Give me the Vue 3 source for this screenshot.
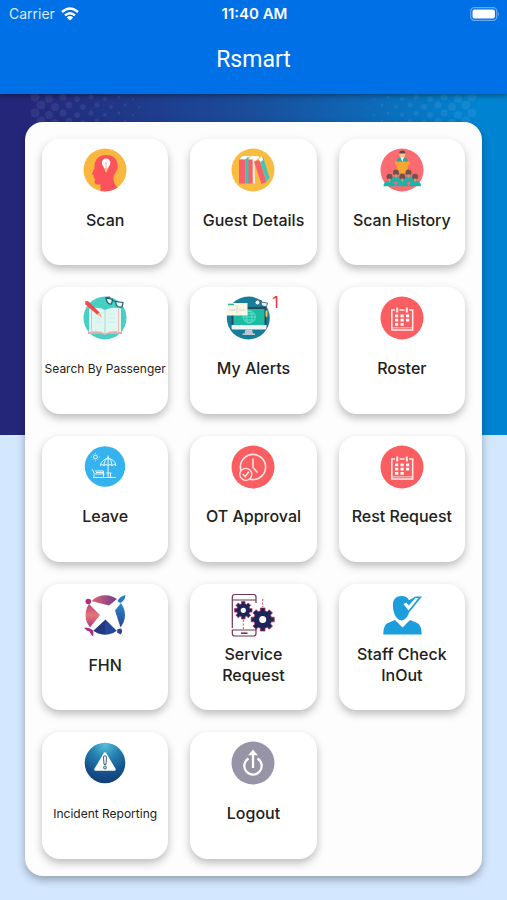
<template>
  <div class="page">
    <header class="app-header">
      <div class="status-bar">
        <div class="carrier">
          <span>Carrier</span>
          <svg class="wifi" viewBox="0 0 18 14" aria-hidden="true">
            <g fill="none" stroke="#fff" stroke-width="2.4">
              <path d="M1 5Q9-2 17 5" />
              <path d="M4 8.4Q9 4 14 8.4" />
            </g>
            <path d="M5.8 10.4Q9 7.6 12.2 10.4L9 13.6Z" fill="#fff" />
          </svg>
        </div>
        <span class="clock">11:40 AM</span>
        <svg class="battery" viewBox="0 0 30 14" aria-hidden="true">
          <rect x=".7" y=".7" width="26" height="12.6" rx="3.6" fill="none" stroke="#6aa9f2" stroke-width="1.2" />
          <rect x="2.5" y="2.5" width="22.4" height="9" rx="2" fill="#fff" />
          <path d="M28 4.6Q30 7 28 9.4Z" fill="#6aa9f2" />
        </svg>
      </div>
      <h1>Rsmart</h1>
    </header>

    <main class="content">
      <svg class="dots dots-left" viewBox="0 0 120 30" aria-hidden="true">
        <circle v-for="(d, i) in dots" :key="i" :cx="d.x" :cy="d.y" :r="d.r" />
      </svg>
      <svg class="dots dots-right" viewBox="0 0 120 30" aria-hidden="true">
        <circle v-for="(d, i) in dots" :key="i" :cx="d.x" :cy="d.y" :r="d.r" />
      </svg>

      <section class="panel">
        <button v-for="item in items" :key="item.label" type="button" class="tile">
          <span class="icon-row">
            <svg class="icon" viewBox="0 0 44 44" aria-hidden="true">
              <g v-if="item.icon === 'scan'">
                <circle cx="22" cy="22" r="21.5" fill="#f9b83d" />
                <path d="M17.5 43V36.5Q12 37 11.6 34.5L12 31 10.6 29.6 11 27.4 8.7 26 11.4 20.5C11 12 15.5 7 23 7 31 7 35 12 34.7 18.5 34.5 24 30 26 30.5 31Q31 36 34.5 39.5Q27 44.5 17.5 43Z" fill="#fb535c" />
                <path d="M21 20.5C21 18.5 18.8 17.5 18.8 14.8A4.3 4.3 0 0 1 27.4 14.8C27.4 17.5 25.2 18.5 25.2 20.5Z" fill="#fff" />
                <path d="M22 14.5L23.1 16 24.2 14.5M23.1 16V20" fill="none" stroke="#f7a65b" stroke-width=".8" />
                <path d="M21.5 21H24.7L24 24H22.2Z" fill="#f9c75c" />
              </g>

              <g v-else-if="item.icon === 'books'">
                <circle cx="22" cy="22" r="21.5" fill="#fabb43" />
                <path d="M8.3 11.5L11.5 8H19L16 11.5ZM17 11.5L20 8H26L29 9 24 13Z" fill="#fff" />
                <path d="M8 11.5H14.5V35.5H8ZM17 11.5H21.8V35.5H17Z" fill="#f75f6b" />
                <path d="M14.5 11.5L17.5 8.3V35.5H14.5Z" fill="#43bfb5" />
                <path d="M21.8 11.5L23.5 10 24 35.5H21.8Z" fill="#f7f0ed" />
                <path d="M23 13.5L28.5 12 35.5 34 30.5 36Z" fill="#f75f6b" />
                <path d="M28.5 11.5L32 8.5 38.5 30 35.5 33.5Z" fill="#42c5b8" />
                <path d="M27.5 11L31 8.5 32 12 29.5 14Z" fill="#fff" />
              </g>

              <g v-else-if="item.icon === 'audience'">
                <circle cx="22" cy="22" r="21.5" fill="#fb6b71" />
                <path d="M16.5 14Q16.5 10 20 10H24.5Q28 10 28 14Z" fill="#28a79f" />
                <path d="M20.5 9H24L22.3 14Z" fill="#fff" />
                <circle cx="22.3" cy="6.4" r="3" fill="#f7c594" />
                <path d="M19.3 5.5Q19 2.6 22.3 2.6 25.6 2.6 25.3 5.5Z" fill="#644745" />
                <path d="M15 13.5H29.6V17H28L27.3 25H17.3L16.6 17H15Z" fill="#f5a62e" />
                <g v-for="p in people" :key="p.x">
                  <path :d="`M${p.x - 6} ${p.y + 9.5}Q${p.x - 6} ${p.y + 4} ${p.x} ${p.y + 4}Q${p.x + 6} ${p.y + 4} ${p.x + 6} ${p.y + 9.5}Z`" fill="#1eb3aa" />
                  <circle :cx="p.x" :cy="p.y" r="3" fill="#73504c" />
                  <path :d="`M${p.x - 1.5} ${p.y + 2}H${p.x + 1.5}L${p.x} ${p.y + 6}Z`" fill="#d99a79" />
                </g>
              </g>

              <g v-else-if="item.icon === 'book'">
                <circle cx="22" cy="22" r="21.5" fill="#47cfc3" />
                <path d="M5 35H39V38H25L22 39 19 38H5Z" fill="#e9a9a6" />
                <path d="M6 12.5Q16 10.5 22 14 28 10.5 38 12.5V36Q28 34 22 37.5 16 34 6 36Z" fill="#e0f7f1" />
                <path d="M22 14V37" stroke="#a5ddd2" stroke-width="1" />
                <path d="M8.5 13V35M35.5 13V35" stroke="#eebcb8" stroke-width="1" />
                <path d="M12 18H19M12 22H19M12 26H19M25 18H32M25 22H32M25 26H32" stroke="#cdeee7" stroke-width="1" />
                <path d="M2 5.5L5 5 16.5 16.5 18.5 21 14 18.5 2.5 8.5Z" fill="#ee4b4e" />
                <path d="M14 18.5L16.5 16.5 18.5 21Z" fill="#f8c687" />
                <path d="M23 1.6L29.5 3.5 28.5 8Q23.5 8.5 23 1.6ZM32.5 5.5L40 6.5 39 11Q33 12 32.5 5.5ZM29.5 4.5L32.5 5.8M23 1.6L27 1" fill="#e7f9fb" stroke="#255d72" stroke-width="1.2" />
              </g>

              <g v-else-if="item.icon === 'monitor'">
                <circle cx="22.3" cy="22" r="21.5" fill="#157e98" />
                <rect x="5.5" y="11" width="35" height="22" rx="1.5" fill="#29485f" />
                <rect x="7.5" y="13" width="31" height="16" fill="#1cbca2" />
                <path d="M5.5 29H40.5V32Q40.5 33.5 39 33.5H7Q5.5 33.5 5.5 32Z" fill="#eff4f5" />
                <path d="M19.5 33.5H26L27 37.5H29V39H16.5V37.5H18.5Z" fill="#b9c8d1" />
                <g fill="none" stroke="#69e2cf" stroke-width=".9">
                  <circle cx="23.3" cy="21" r="6" />
                  <ellipse cx="23.3" cy="21" rx="2.7" ry="6" />
                  <path d="M17.3 21H29.3M18.2 18H28.4M18.2 24H28.4" />
                </g>
                <path d="M.5 7H21.5V19.5H.5Z" fill="#fbf7e7" />
                <path d="M2 8.5H8" stroke="#28b89f" stroke-width="1.5" />
                <path d="M3 14H9.5M12.5 14H19M11 9V18" stroke="#d2d4c8" stroke-width="1" />
                <path d="M39.5 14.5H41.5V20L40.5 21.5 39.5 20Z" fill="#f3c650" />
                <g fill="#e2f4fa" stroke="#32526d" stroke-width=".8">
                  <circle cx="31.5" cy="6.5" r="2.5" />
                  <path d="M35 6L41.5 7 40.5 10.5Q35 11 35 6ZM33 4L36 5" />
                </g>
              </g>

              <g v-else-if="item.icon === 'calendar'">
                <circle cx="22" cy="22" r="21.5" fill="#fa5e60" />
                <g fill="none" stroke="#ffecec" stroke-width="1.5">
                  <path d="M15 14H11.8V34H32.7V14H29M19.5 14H24.5" />
                  <path d="M17.2 11.5V16.5M26.8 11.5V16.5" stroke-width="2" />
                </g>
                <path d="M11.8 31.8H32.7" stroke="#ffecec" stroke-width=".8" />
                <path d="M15 18.5H18.2V21.2H15ZM20.5 18.5H23.7V21.2H20.5ZM26 18.5H29.2V21.2H26ZM15 22.8H18.2V25.5H15ZM20.5 22.8H23.7V25.5H20.5ZM26 22.8H29.2V25.5H26ZM15 27.1H18.2V29.8H15ZM20.5 27.1H23.7V29.8H20.5Z" fill="#fff" />
              </g>

              <g v-else-if="item.icon === 'beach'">
                <circle cx="22" cy="21.5" r="20.2" fill="#35b3ef" />
                <g fill="none" stroke="#e6f7ff" stroke-width="1">
                  <circle cx="12.4" cy="12" r="1.9" />
                  <path d="M12.4 8.5V7.8M12.4 15.5V16.2M8.9 12H8.2M15.9 12H16.6M10 9.6L9.5 9.1M14.8 9.6L15.3 9.1M10 14.4L9.5 14.9M14.8 14.4L15.3 14.9" />
                  <path d="M17.3 20.5A8 8.5 0 0 1 33 20.5Q31 18.5 29 20.5 27 18.5 25.1 20.5 23 18.5 21 20.5 19 18.5 17.3 20.5ZM21 20.5Q21 15 25.1 12 29 15 29 20.5M25.1 10.5V32" />
                  <path d="M10 32.5H33M9 24L11.5 29H21.5M11 29.5V32M20.5 29V32M12 26H20.5V29M13 27.5H20M23 28H28.5M27.5 28V32" />
                </g>
              </g>

              <g v-else-if="item.icon === 'clock'">
                <circle cx="22" cy="22" r="21.5" fill="#fa5e60" />
                <g fill="none" stroke="#ffe6e5" stroke-width="1.6" stroke-linecap="round">
                  <circle cx="22" cy="22" r="12.6" />
                  <path d="M22 14V22.5L26 27" />
                  <circle cx="14.8" cy="29.3" r="6" fill="#fa5e60" stroke-width="1.3" />
                  <path d="M12.2 29.5L14.2 31.5 17.5 27.2" />
                </g>
              </g>

              <g v-else-if="item.icon === 'plane'">
                <defs>
                  <linearGradient id="fhn-left" x1="0" y1="0" x2="0" y2="1">
                    <stop offset="0" stop-color="#b4357d" />
                    <stop offset=".5" stop-color="#e37579" />
                    <stop offset="1" stop-color="#ad2d83" />
                  </linearGradient>
                  <linearGradient id="fhn-top">
                    <stop offset="0" stop-color="#e16477" />
                    <stop offset="1" stop-color="#67398c" />
                  </linearGradient>
                  <linearGradient id="fhn-right" x1="0" y1="0" x2="0" y2="1">
                    <stop offset="0" stop-color="#2c91d2" />
                    <stop offset="1" stop-color="#293c8f" />
                  </linearGradient>
                </defs>
                <path d="M22 22L8.5 8A19.3 19.3 0 0 0 8.5 36Z" fill="url(#fhn-left)" />
                <path d="M22 22L8.5 8A19.3 19.3 0 0 1 36 8Z" fill="url(#fhn-top)" />
                <path d="M22 22L36 8A19.3 19.3 0 0 1 36 36Z" fill="url(#fhn-right)" />
                <path d="M22 22L36 36A19.3 19.3 0 0 1 8.5 36Z" fill="#25479b" />
                <path d="M22 22L22 41.3A19.3 19.3 0 0 1 8.5 36Z" fill="#263781" />
                <path d="M5 6.5L10 8.5 26 12.5 34.5 5.5 39.5 8 32 17.5 38 36 34.5 38.5 22.5 26.5 9.5 38.5 6 38 6.5 35 17 22 6 11Z" fill="#fff" />
                <circle cx="5.3" cy="8.5" r="2.8" fill="#b12d78" />
                <path d="M34.5 8Q36.5 3.5 42.5 2 42 7.5 37.5 10Q36 9.5 34.5 8Z" fill="#247dbc" />
                <path d="M34.5 36L38 35.5Q40.5 38.5 37.5 41.5L34 39.5Z" fill="#35438f" />
                <path d="M1.3 34.5Q8 34.5 10.3 38V43.5Q7.8 42 6.5 38.5Q3 38 1.3 34.5Z" fill="#af2c86" />
              </g>

              <g v-else-if="item.icon === 'service'">
                <g fill="none" stroke="#713450" stroke-width="1.2">
                  <path d="M1.3 35V4Q1.3 1.5 4 1.5H22.5Q25 1.5 25 4V7H1.3M25 7V10M25 37H1.3V40.5Q1.3 43 4 43H22.5Q25 43 25 40.5V34" />
                  <path d="M10 40.2H16.5" stroke-width="1.6" />
                </g>
                <path d="M12.3 27V36M31.7 6V14" stroke="#dc4865" stroke-width="1" stroke-dasharray="2 1.5" />
                <g fill="#1d2459" stroke="#b52f58" stroke-width=".7">
                  <path :d="gear(12.3, 17.3, 8.9, 6.7)" />
                  <path :d="gear(31.7, 26.5, 11.8, 9)" />
                </g>
                <circle cx="12.3" cy="17.3" r="2.6" fill="#fff" />
                <circle cx="31.7" cy="26.5" r="3.5" fill="#fff" />
              </g>

              <g v-else-if="item.icon === 'staff'" fill="#1c9ddc">
                <path d="M21.5 3C15 3 12.5 7 13 14 13.5 21.5 17 27 21.5 27.5 26 27 29.5 21.5 30 14 30.3 7 28 3 21.5 3Z" />
                <path d="M3.3 41.5C3.5 35 4.5 31 9 29.5L15 27 22.5 34.5 30 27 36 29.5C40.5 31 41.5 35 41.7 41.5Z" />
                <path d="M26 9L35.5 3.5H42L29 19.5Z" />
                <path d="M23.5 11L26.5 9.5 28.7 12.5 35.5 5H38.5L28.5 17.5Z" fill="#fff" />
              </g>

              <g v-else-if="item.icon === 'warning'">
                <defs>
                  <radialGradient id="warn-bg" cx=".5" cy=".05" r=".95">
                    <stop offset="0" stop-color="#55bfdd" />
                    <stop offset=".38" stop-color="#237fae" />
                    <stop offset=".75" stop-color="#16518b" />
                    <stop offset="1" stop-color="#123e77" />
                  </radialGradient>
                </defs>
                <circle cx="22" cy="22" r="20.3" fill="url(#warn-bg)" />
                <path d="M22 12.5L31.5 28.5H12.5Z" fill="#fff" stroke="#fff" stroke-width="2.5" stroke-linejoin="round" />
                <path d="M20.5 15.5Q22 14 23.5 15.5L23 23.5H21ZM20.8 25.5Q22 24.5 23.2 25.5V27.5Q22 28.5 20.8 27.5Z" fill="#fff" stroke="#41597b" stroke-width="1" />
              </g>

              <g v-else-if="item.icon === 'logout'">
                <circle cx="22" cy="22" r="21.5" fill="#9694a6" />
                <path d="M17.5 17.5A8.7 8.7 0 1 0 26.5 17.5M22 27V13" fill="none" stroke="#fff" stroke-width="2.3" />
                <path d="M22 8.5L26.8 14.3H17.2Z" fill="#fff" />
              </g>
            </svg>
            <span v-if="item.count" class="count">{{ item.count }}</span>
          </span>
          <span class="label" :class="{ small: item.small }">{{ item.label }}</span>
        </button>
      </section>
    </main>
  </div>
</template>

<script setup>
const items = [
  { label: 'Scan', icon: 'scan' },
  { label: 'Guest Details', icon: 'books' },
  { label: 'Scan History', icon: 'audience' },
  { label: 'Search By Passenger', icon: 'book', small: true },
  { label: 'My Alerts', icon: 'monitor', count: 1 },
  { label: 'Roster', icon: 'calendar' },
  { label: 'Leave', icon: 'beach' },
  { label: 'OT Approval', icon: 'clock' },
  { label: 'Rest Request', icon: 'calendar' },
  { label: 'FHN', icon: 'plane' },
  { label: 'Service Request', icon: 'service' },
  { label: 'Staff Check InOut', icon: 'staff' },
  { label: 'Incident Reporting', icon: 'warning', small: true },
  { label: 'Logout', icon: 'logout' },
];

// back row first so the front row overlaps it
const people = [
  { x: 16, y: 24.5 },
  { x: 28.5, y: 24.5 },
  { x: 9.5, y: 28.8 },
  { x: 22.3, y: 28.8 },
  { x: 35, y: 28.8 },
];

// halftone pattern, dots shrink to the right
const dots = [];
for (let row = 0; row < 4; row++) {
  for (let col = 0; col < 8; col++) {
    dots.push({
      x: 5 + col * 14 + (row % 2) * 6,
      y: 3 + row * 8 + (col % 2) * 2,
      r: Math.max(1, 4.5 - col * 0.5),
    });
  }
}

// eight-toothed wheel around cx, cy
const gear = (cx, cy, outer, inner) => {
  const points = [];
  for (let i = 0; i < 8; i++) {
    const mid = (i * Math.PI) / 4;
    [[-0.26, inner], [-0.2, outer], [0.2, outer], [0.26, inner]].forEach(([a, r]) => {
      points.push(`${(cx + r * Math.cos(mid + a)).toFixed(2)} ${(cy + r * Math.sin(mid + a)).toFixed(2)}`);
    });
  }
  return `M${points.join('L')}Z`;
};
</script>

<style>
body {
  background: #d3e7fe;
}
</style>

<style scoped>
.page {
  min-height: 100vh;
  font-family: Inter, "Liberation Sans", sans-serif;
}

.app-header {
  position: relative;
  z-index: 1;
  height: 94px;
  background: #0070e6;
  color: #fff;
  box-shadow: 0 2px 5px rgba(0, 0, 0, 0.35);
}

.status-bar {
  display: grid;
  grid-template-columns: 1fr auto 1fr;
  align-items: center;
  height: 27px;
  padding: 0 7px 0 9px;
  font-size: 14px;
}

.carrier {
  display: flex;
  align-items: center;
  gap: 6px;
  color: #d9eaff;
}

.wifi {
  width: 18px;
  height: 14px;
}

.clock {
  font-size: 15px;
  font-weight: 600;
}

.battery {
  justify-self: end;
  width: 30px;
  height: 14px;
}

h1 {
  margin: 0;
  font-family: Roboto, sans-serif;
  font-size: 23px;
  font-weight: 400;
  line-height: 66px;
  text-align: center;
}

.content {
  position: relative;
  padding: 28px 25px 24px;
  background: linear-gradient(90deg, #242779 5%, #1a4e9b 50%, #0084d2 95%) no-repeat;
  background-size: 100% 341px;
}

.dots {
  position: absolute;
  top: 0;
  width: 120px;
  height: 30px;
  fill: rgba(255, 255, 255, 0.07);
}

.dots-left {
  left: 30px;
}

.dots-right {
  right: 30px;
  transform: scaleX(-1);
}

.panel {
  position: relative;
  display: grid;
  grid-template-columns: repeat(3, 1fr);
  gap: 22px;
  padding: 17px;
  border-radius: 18px;
  background: #fdfdfd;
  box-shadow: 0 4px 8px rgba(0, 0, 0, 0.3);
}

.tile {
  display: flex;
  flex-direction: column;
  align-items: center;
  min-width: 0;
  aspect-ratio: 1;
  padding: 9px 0 0;
  border: none;
  border-radius: 18px;
  background: #fff;
  box-shadow: 0 4px 8px rgba(0, 0, 0, 0.26);
  color: #212121;
  font-family: inherit;
  cursor: pointer;
}

.tile:active {
  background: #f2f6fb;
}

.icon-row {
  display: flex;
}

.icon {
  width: 44px;
  height: 44px;
}

.count {
  width: 10px;
  color: #f5333a;
  font-size: 16px;
  line-height: 12px;
}

.label {
  display: flex;
  align-items: center;
  justify-content: center;
  height: 56px;
  padding: 0 8px;
  font-size: 16px;
  font-weight: 500;
  line-height: 21px;
}

.label.small {
  padding: 0;
  font-size: 12px;
  font-weight: 400;
  white-space: nowrap;
}
</style>
